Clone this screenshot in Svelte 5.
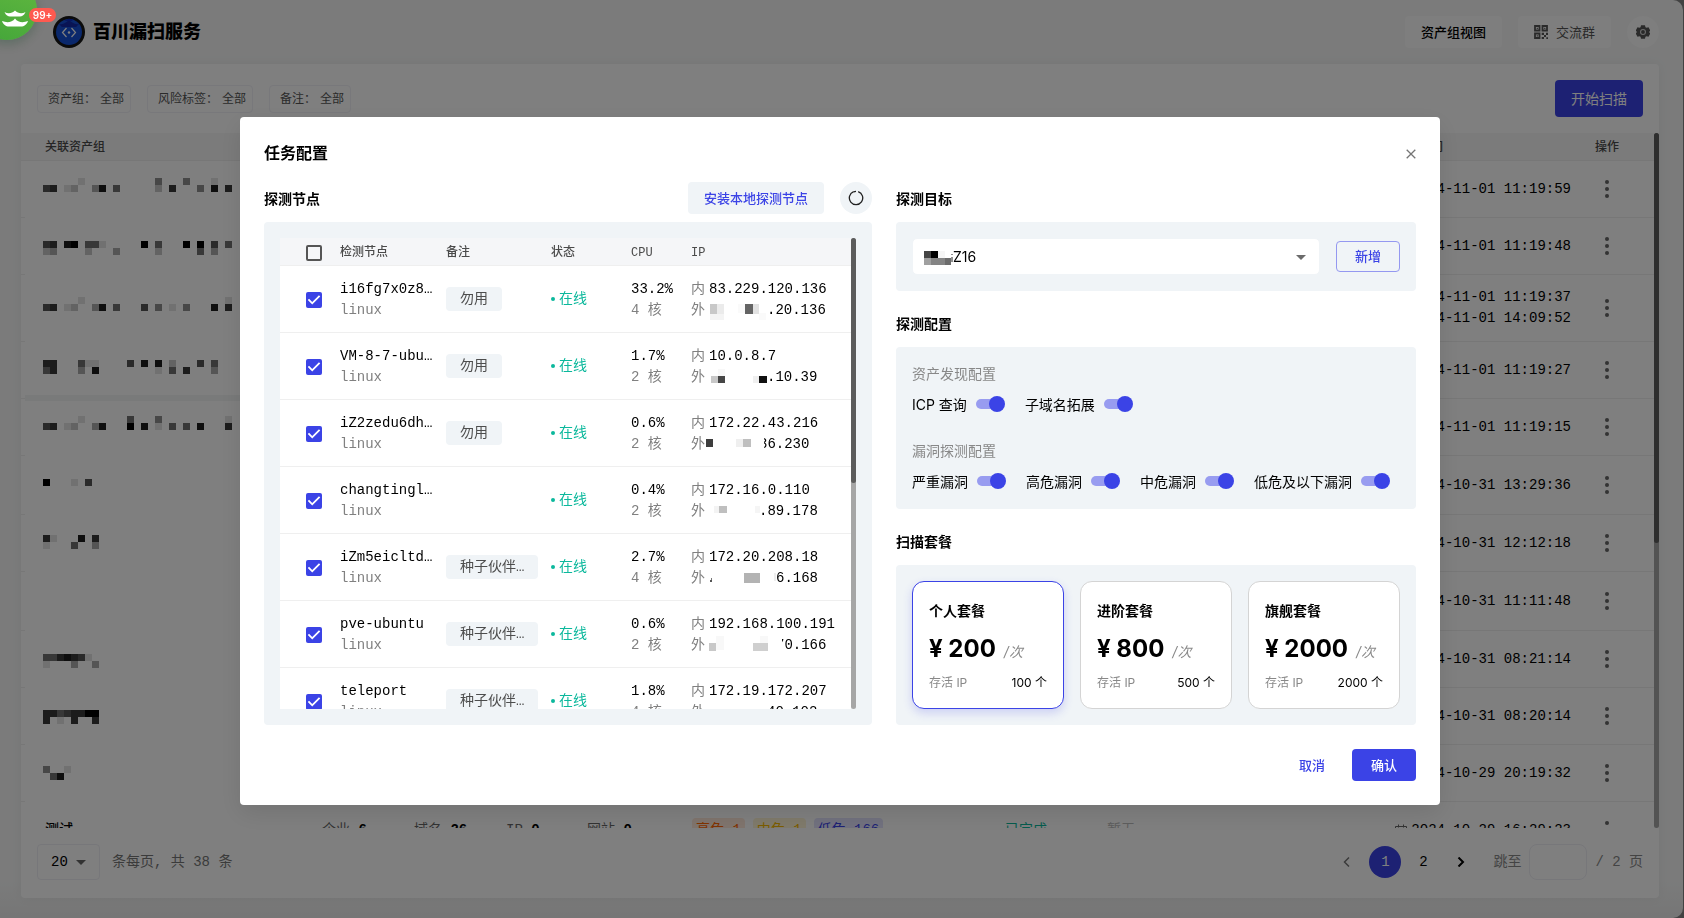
<script lang="ts">
	type Patch = [x: number, y: number, w: number, h: number, fill: string];

	let tasks = [
		{ times: ['2024-11-01 11:19:59'] },
		{ times: ['2024-11-01 11:19:48'] },
		{ times: ['2024-11-01 11:19:37', '2024-11-01 14:09:52'] },
		{ times: ['2024-11-01 11:19:27'] },
		{ times: ['2024-11-01 11:19:15'] },
		{ times: ['2024-10-31 13:29:36'], tall: true },
		{ times: ['2024-10-31 12:12:18'] },
		{ times: ['2024-10-31 11:11:48'], tall: true },
		{ times: ['2024-10-31 08:21:14'] },
		{ times: ['2024-10-31 08:20:14'] },
		{ times: ['2024-10-29 20:19:32'] }
	];

	// each mask line: y offset and the darkness (0-9) of its 7px cells
	const mask: [number, string][] = [
		[12, '.....1..........4...4...1'],
		[19, '67.12..38.5.....2.7...4.8.7'],
		[75, '67.89.551.....9.5...9.9.6.5'],
		[82, '23....2...3.....2.....5.3'],
		[131, '.....1....................1'],
		[138, '67.12..38.5...6.4.1.4...8.7'],
		[194, '77...511....6.8.8.2...6.5'],
		[201, '57...3.8........1.5.7...3'],
		[250, '.....1......5...4.........1'],
		[257, '67.12..38...9.8.1.5.5.8...7'],
		[313, '9...1.6'],
		[369, '71...8.7'],
		[376, '1...5..3'],
		[488, '5578761'],
		[495, '1...3..3'],
		[544, '77567799'],
		[551, '7.1.7..7'],
		[600, '4..1'],
		[607, '.58']
	];
	const maskCells = mask.flatMap(([y, line]) =>
		[...line].map((c, i) => ({ x: 18 + i * 7, y, dark: Number(c) / 9 })).filter((c) => c.dark > 0)
	);

	let nodes: {
		name: string;
		remark?: string;
		cpu: string;
		cores: number;
		inner: string;
		outer: string;
		hidden: number;
		patches: Patch[];
		checked: boolean;
	}[] = [
		{
			name: 'i16fg7x0z8…', remark: '勿用', cpu: '33.2%', cores: 4,
			inner: '83.229.120.136', outer: '.20.136', hidden: 58, checked: true,
			patches: [[1, 4, 7, 10, '#c8c8c8'], [8, 4, 7, 10, '#ebebeb'], [1, 14, 14, 6, '#f4f4f4'], [29, 4, 7, 9, '#fafafa'], [36, 4, 8, 10, '#646464'], [44, 4, 6, 10, '#e2e2e2'], [50, 13, 7, 7, '#fafafa']]
		},
		{
			name: 'VM-8-7-ubu…', remark: '勿用', cpu: '1.7%', cores: 2,
			inner: '10.0.8.7', outer: '.10.39', hidden: 58, checked: true,
			patches: [[2, 9, 7, 7, '#c8c8c8'], [9, 9, 7, 7, '#464646'], [9, 2, 7, 7, '#f8f8f8'], [44, 9, 6, 7, '#efefef'], [50, 9, 8, 7, '#111111']]
		},
		{
			name: 'iZ2zedu6dh…', remark: '勿用', cpu: '0.6%', cores: 2,
			inner: '172.22.43.216', outer: '36.230', hidden: 50, checked: true,
			patches: [[-3, 5, 7, 8, '#3d3d3d'], [27, 5, 7, 8, '#efefef'], [34, 5, 8, 8, '#bfbfbf'], [50, 2, 5, 17, '#ffffff']]
		},
		{
			name: 'changtingl…', cpu: '0.4%', cores: 2,
			inner: '172.16.0.110', outer: '.89.178', hidden: 50, checked: true,
			patches: [[5, 5, 5, 7, '#f3f3f3'], [10, 5, 8, 7, '#bfbfbf'], [46, 5, 5, 7, '#f5f5f5']]
		},
		{
			name: 'iZm5eicltd…', remark: '种子伙伴…', cpu: '2.7%', cores: 4,
			inner: '172.20.208.18', outer: '6.168', hidden: 67, checked: true,
			patches: [[2, 10, 1, 2, '#777777'], [1, 12, 2, 2, '#555555'], [35, 5, 16, 10, '#b3b3b3'], [65, 5, 2, 8, '#eeeeee']]
		},
		{
			name: 'pve-ubuntu', remark: '种子伙伴…', cpu: '0.6%', cores: 2,
			inner: '192.168.100.191', outer: '70.166', hidden: 67, checked: true,
			patches: [[0, 8, 7, 8, '#c8c8c8'], [7, 1, 8, 14, '#f8f8f8'], [44, 8, 15, 8, '#cfcfcf'], [51, 1, 8, 7, '#f8f8f8'], [67, 2, 6, 17, '#ffffff']]
		},
		{
			name: 'teleport', remark: '种子伙伴…', cpu: '1.8%', cores: 4,
			inner: '172.19.172.207', outer: '40.102', hidden: 58, checked: true,
			patches: []
		}
	];

	let discovery = [
		{ name: 'ICP 查询', on: true },
		{ name: '子域名拓展', on: true }
	];
	let risks = [
		{ name: '严重漏洞', on: true },
		{ name: '高危漏洞', on: true },
		{ name: '中危漏洞', on: true },
		{ name: '低危及以下漏洞', on: true }
	];

	const plans = [
		{ id: 'personal', name: '个人套餐', price: 200, ips: 100 },
		{ id: 'advanced', name: '进阶套餐', price: 800, ips: 500 },
		{ id: 'flagship', name: '旗舰套餐', price: 2000, ips: 2000 }
	];
	let plan = 'personal';
	let allChecked = false;
</script>

<div class="shell">
	<header>
		<svg class="logo" viewBox="0 0 32 32" aria-hidden="true">
			<circle cx="16" cy="16" r="16" fill="#161616" />
			<circle cx="16" cy="16" r="13" fill="#1450d8" />
			<path d="M6 8q5 1 10-4q5 5 10 4l-3 3H9z" fill="#1228a8" />
			<path d="M11 4q3 0 5-1.500q2 1.500 5 0l-2 2.500h-6z" fill="#0a2cc0" />
			<path d="M13.500 12L9.500 16.500l4 4.500M18.500 12l4 4.500l-4 4.500" fill="none" stroke="#fff" stroke-width="1.200" />
			<circle cx="16" cy="16.500" r="1.200" fill="#fff" />
		</svg>
		<h1>百川漏扫服务</h1>
		<nav>
			<button class="view">资产组视图</button>
			<button class="group">
				<svg viewBox="0 0 14 14" width="14" height="14" aria-hidden="true">
					<path d="M1 1h4.500v4.500H1zM8.500 1H13v4.500H8.500zM1 8.500h4.500V13H1z" fill="none" stroke="currentColor" stroke-width="1.800" />
					<path d="M2.700 2.700h1.200v1.200H2.700zM10.200 2.700h1.200v1.200h-1.200zM2.700 10.200h1.200v1.200H2.700zM7.700 7.700h2.300v2.300H7.700zM10 10h2v2h-2zM12 7.700h2V10h-2zM7.700 12h2.300v2H7.700zM12.300 12.300H14V14h-1.700z" fill="currentColor" />
				</svg>
				交流群
			</button>
			<button class="gear" aria-label="设置">
				<svg viewBox="2 2 20 20" width="14" height="14" aria-hidden="true">
					<path d="M9.200 2.300h5.600l.7 2.800 1.600.9 2.800-.8 2.600 4.700-2 2.100 2 2.100-2.600 4.700-2.800-.8-1.600.9-.7 2.800H9.200l-.7-2.800-1.600-.9-2.800.8-2.600-4.700 2-2.100-2-2.100 2.600-4.700 2.800.8 1.600-.9z" fill="currentColor" />
					<circle cx="12" cy="12" r="3.500" fill="none" stroke="#d8d8d8" stroke-width="1.500" />
				</svg>
			</button>
		</nav>
	</header>

	<main>
		<div class="toolbar">
			<button class="filter"><span>资产组：</span>全部</button>
			<button class="filter"><span>风险标签：</span>全部</button>
			<button class="filter"><span>备注：</span>全部</button>
			<button class="start">开始扫描</button>
		</div>

		<div class="scroll tasks">
			<div class="view-area">
				<table>
					<colgroup>
						<col style:width="277px" />
						<col style:width="370px" />
						<col style:width="313px" />
						<col style:width="102px" />
						<col />
						<col style:width="200px" />
						<col style:width="83px" />
					</colgroup>
					<thead>
						<tr>
							<th>关联资产组</th>
							<th></th>
							<th></th>
							<th></th>
							<th></th>
							<th>任务时间</th>
							<th>操作</th>
						</tr>
					</thead>
					<tbody>
						{#each tasks as task}
							<tr class:tall={task.tall}>
								<td></td>
								<td></td>
								<td></td>
								<td></td>
								<td></td>
								<td class="time">
									{#each task.times as time}
										<div>{time}</div>
									{/each}
								</td>
								<td>
									<button class="more" aria-label="更多"><i></i><i></i><i></i></button>
								</td>
							</tr>
						{/each}
						<tr>
							<td class="name">测试</td>
							<td>
								<div class="stats">
									<span>企业 <b>6</b></span>
									<span>域名 <b>26</b></span>
									<span class="short">IP <b>0</b></span>
									<span>网站 <b>0</b></span>
								</div>
							</td>
							<td>
								<div class="levels">
									<span class="high">高危 1</span>
									<span class="medium">中危 1</span>
									<span class="low">低危 166</span>
								</div>
							</td>
							<td class="done">已完成</td>
							<td class="none">暂无</td>
							<td class="time">
								<div>
									<svg viewBox="0 0 12 12" width="12" height="12" aria-hidden="true">
										<path d="M.5 2.500h11v9H.5zM.5 5h11M3.500.5v3M8.500.5v3" fill="none" stroke="#666" />
									</svg>2024-10-29 16:29:23
								</div>
							</td>
							<td>
								<button class="more" aria-label="更多"><i></i><i></i><i></i></button>
							</td>
						</tr>
					</tbody>
				</table>
				<svg class="mask" width="217" height="652" aria-hidden="true">
					<rect width="217" height="652" fill="#fff" />
					<rect y="229" width="217" height="6" fill="#f3f5f4" />
					{#each maskCells as cell}
						<rect x={cell.x} y={cell.y} width="7" height="7" fill-opacity={cell.dark} />
					{/each}
				</svg>
			</div>
			<div class="bar"><div class="thumb"></div></div>
		</div>

		<footer>
			<div class="size">
				<select aria-label="每页条数">
					<option>20</option>
				</select>
				<svg viewBox="0 0 10 5" width="10" height="5" aria-hidden="true"><path d="M0 0h10L5 5z" fill="currentColor" /></svg>
			</div>
			<span class="total">条每页, 共 38 条</span>
			<div class="pages">
				<button class="prev" aria-label="上一页">
					<svg viewBox="0 0 8 10" width="8" height="10" aria-hidden="true"><path d="M6 .5L1.500 5L6 9.500" fill="none" stroke="currentColor" stroke-width="1.500" /></svg>
				</button>
				<button class="current">1</button>
				<button>2</button>
				<button aria-label="下一页">
					<svg viewBox="0 0 8 10" width="8" height="10" aria-hidden="true"><path d="M1.500 .5L6 5L1.500 9.500" fill="none" stroke="currentColor" stroke-width="2" /></svg>
				</button>
			</div>
			<label class="jump">
				跳至
				<input type="text" />
				<span>/ 2 页</span>
			</label>
		</footer>
	</main>
</div>

<div class="backdrop">
	<div class="modal" role="dialog" aria-modal="true" aria-labelledby="dialog-title">
		<div class="title">
			<h2 id="dialog-title">任务配置</h2>
			<button aria-label="关闭">
				<svg viewBox="0 0 10 10" width="10" height="10" aria-hidden="true"><path d="M.7.7l8.600 8.600M9.300.7L.7 9.300" fill="none" stroke="currentColor" stroke-width="1.300" /></svg>
			</button>
		</div>

		<div class="columns">
			<section class="left">
				<div class="heading">
					<h3>探测节点</h3>
					<button class="install">安装本地探测节点</button>
					<button class="refresh" aria-label="刷新">
						<svg viewBox="0 0 16 16" width="16" height="16" aria-hidden="true"><path d="M10.200 1.600a6.700 6.700 0 1 1-4.600.1" fill="none" stroke="currentColor" stroke-width="1.300" /><path d="M5.300 1.200L8 .7v1.200l-2.200.6z" fill="currentColor" /></svg>
					</button>
				</div>
				<div class="box grow">
					<div class="scroll nodes">
						<div class="view-area">
							<table>
								<colgroup>
									<col style:width="60px" />
									<col style:width="106px" />
									<col style:width="105px" />
									<col style:width="80px" />
									<col style:width="60px" />
									<col />
								</colgroup>
								<thead>
									<tr>
										<th class="pick"><input type="checkbox" aria-label="全选" bind:checked={allChecked} /></th>
										<th>检测节点</th>
										<th>备注</th>
										<th>状态</th>
										<th>CPU</th>
										<th>IP</th>
									</tr>
								</thead>
								<tbody>
									{#each nodes as node}
										<tr>
											<td class="pick"><input type="checkbox" aria-label={node.name} bind:checked={node.checked} /></td>
											<td>
												<div>{node.name}</div>
												<div class="dim">linux</div>
											</td>
											<td class="remark">
												{#if node.remark}<span class="tag">{node.remark}</span>{/if}
											</td>
											<td class="status"><span class="online">在线</span></td>
											<td>
												<div>{node.cpu}</div>
												<div class="dim">{node.cores} 核</div>
											</td>
											<td>
												<div class="ip"><span class="dim">内</span>{node.inner}</div>
												<div class="ip">
													<span class="dim">外</span><svg width={node.hidden} height="21" aria-hidden="true">
														{#each node.patches as [x, y, w, h, fill]}
															<rect {x} {y} width={w} height={h} {fill} />
														{/each}
													</svg>{node.outer}
												</div>
											</td>
										</tr>
									{/each}
								</tbody>
							</table>
						</div>
						<div class="bar"><div class="thumb"></div></div>
					</div>
				</div>
			</section>

			<section class="right">
				<div class="heading"><h3>探测目标</h3></div>
				<div class="box target">
					<div class="picker">
						<select aria-label="探测目标">
							<option>Z16</option>
						</select>
						<svg class="redacted" viewBox="0 0 29 14" width="29" height="14" aria-hidden="true">
							<path d="M0 0h7v7H0z" fill="#444" />
							<path d="M7 0h7v7H7z" />
							<path d="M14 0h7v7h-7z" fill="#f6f6f6" />
							<path d="M0 7h7v7H0z" fill="#a0a0a0" />
							<path d="M7 7h14v7H7z" fill="#848484" />
							<path d="M21 7h6v7h-6z" fill="#6c6c6c" />
							<path d="M27.500 3h1v1h-1zM27.500 6h1v5h-1z" fill="#222" />
						</svg>
						<svg class="arrow" viewBox="0 0 10 5" width="10" height="5" aria-hidden="true"><path d="M0 0h10L5 5z" fill="currentColor" /></svg>
					</div>
					<button class="add">新增</button>
				</div>

				<div class="heading"><h3>探测配置</h3></div>
				<div class="box config">
					<h4>资产发现配置</h4>
					<div class="switches">
						{#each discovery as item}
							<label>{item.name}<input type="checkbox" role="switch" bind:checked={item.on} /></label>
						{/each}
					</div>
					<h4>漏洞探测配置</h4>
					<div class="switches">
						{#each risks as item}
							<label>{item.name}<input type="checkbox" role="switch" bind:checked={item.on} /></label>
						{/each}
					</div>
				</div>

				<div class="heading"><h3>扫描套餐</h3></div>
				<div class="box plans">
					{#each plans as p}
						<label class:selected={plan === p.id}>
							<input type="radio" name="plan" value={p.id} bind:group={plan} />
							<strong>{p.name}</strong>
							<span class="price">¥ {p.price}<em>/次</em></span>
							<span class="quota"><span>存活 IP</span>{p.ips} 个</span>
						</label>
					{/each}
				</div>
			</section>
		</div>

		<div class="actions">
			<button class="cancel">取消</button>
			<button class="confirm">确认</button>
		</div>
	</div>
</div>

<a class="widget" href="#messages" aria-label="消息">
	<svg viewBox="0 0 60 60" width="60" height="60" aria-hidden="true">
		<path d="M27.500 32C31 34 35 33.500 38 30.500C41 33.500 45 34 48.500 32C47 35.500 45 36.500 43 36.500H33C31 36.500 29 35.500 27.500 32Z" fill="#fff" />
		<path d="M25 41C30 43 35 42.500 38 38.500C41 42.500 46 43 51 41C50 44.500 47 46.500 44 46.500H32C29 46.500 26 44.500 25 41Z" fill="#fff" />
	</svg>
	<span>99+</span>
</a>

<style>
	:global(body) {
		background: #858585;
	}
	.shell,
	.backdrop,
	.widget {
		--blue: #3b43e6;
		--soft: #f0f4f7;
		--mono: 'Liberation Mono', 'Noto Sans CJK SC', monospace;
		font-family: Inter, 'Noto Sans CJK SC', sans-serif;
		font-size: 14px;
		line-height: 21px;
		color: #000;
	}
	.shell *,
	.backdrop * {
		box-sizing: border-box;
	}
	h1,
	h2,
	h3,
	h4 {
		margin: 0;
	}
	button,
	select,
	input {
		font: inherit;
		color: inherit;
		margin: 0;
	}
	button {
		display: flex;
		align-items: center;
		justify-content: center;
		border: 0;
		padding: 0;
		background: none;
		border-radius: 4px;
		cursor: pointer;
		white-space: nowrap;
	}

	/* page behind the dialog */
	.shell {
		height: 100vh;
		margin-right: 1px;
		border-radius: 0 10px 10px 0;
		display: flex;
		flex-direction: column;
		background: linear-gradient(#f6f7f7 96%, #ececec);
	}
	header {
		display: flex;
		align-items: center;
		height: 64px;
		flex: none;
		padding: 0 24px 0 53px;
	}
	.logo {
		width: 32px;
		height: 32px;
		margin-right: 8px;
	}
	h1 {
		font-size: 18px;
		line-height: 24px;
		font-weight: 900;
	}
	nav {
		display: flex;
		gap: 16px;
		margin-left: auto;
		font-size: 13px;
	}
	nav button {
		height: 32px;
		padding: 0 16px;
		gap: 8px;
		background: #fcfcfc;
	}
	.view {
		font-weight: 500;
	}
	.group {
		color: #555;
	}
	.gear {
		width: 32px;
		padding: 0;
		border-radius: 50%;
		color: #555;
	}
	main {
		flex: 1;
		min-height: 0;
		display: flex;
		flex-direction: column;
		margin: 0 24px 20px 21px;
		background: #fff;
		border-radius: 4px;
		box-shadow: 0 0 12px rgba(0, 0, 0, 0.05);
		overflow: hidden;
	}
	.toolbar {
		display: flex;
		align-items: center;
		gap: 16px;
		padding: 16px;
	}
	.filter {
		height: 28px;
		padding: 0 6px 0 10px;
		gap: 4px;
		border: 1px solid #f0f0f6;
		font-size: 12px;
		color: #555;
	}
	.start {
		height: 37px;
		padding: 0 16px;
		margin-left: auto;
		background: var(--blue);
		color: #fff;
	}

	.scroll {
		flex: 1;
		display: flex;
		contain: size;
		overflow: hidden;
	}
	.view-area {
		flex: 1;
		min-width: 0;
		position: relative;
		overflow: hidden;
	}
	.bar {
		width: 5px;
		background: #a6a6a6;
		border-radius: 3px;
	}
	.thumb {
		background: #5c5c5c;
		border-radius: 3px;
		height: 52%;
	}
	.tasks .thumb {
		height: 59%;
	}
	table {
		width: 100%;
		table-layout: fixed;
		border-collapse: separate;
		border-spacing: 0;
		font-family: var(--mono);
	}
	th {
		height: 28px;
		padding: 0;
		border-bottom: 1px solid #efefef;
		background: #f5f6f8;
		font-size: 12px;
		line-height: 18px;
		font-weight: 500;
		color: #4a4a4a;
		text-align: left;
		white-space: nowrap;
	}
	td {
		height: 57px;
		padding: 0;
		border-bottom: 1px solid #efefef;
		white-space: nowrap;
	}
	.tasks th {
		font-family: Inter, 'Noto Sans CJK SC', sans-serif;
		background: #f6f6f7;
	}
	.tasks th,
	.tasks td {
		padding-left: 24px;
	}
	.tasks td {
		padding-top: 12px;
		padding-bottom: 12px;
	}
	.tall td {
		height: 59px;
	}
	.time div {
		display: flex;
		align-items: center;
		justify-content: flex-end;
		gap: 4px;
	}
	.more {
		flex-direction: column;
		gap: 3px;
		width: 24px;
		height: 24px;
	}
	.more i {
		width: 4px;
		height: 4px;
		border-radius: 50%;
		background: #666;
	}
	.mask {
		position: absolute;
		left: 4px;
		top: 33px;
	}
	.stats {
		display: flex;
		color: #666;
	}
	.stats span {
		flex: none;
		width: 92px;
	}
	.stats .short {
		width: 81px;
	}
	.stats b {
		color: #000;
	}
	.levels {
		display: flex;
		gap: 8px;
	}
	.levels span {
		padding: 0 4px;
		line-height: 24px;
		border-radius: 4px;
	}
	.high {
		color: #ff6600;
		background: #ffe8da;
	}
	.medium {
		color: #f5b800;
		background: #fff5d6;
	}
	.low {
		color: #3b43e6;
		background: #e2e3fc;
	}
	.name {
		font-weight: 500;
	}
	.done {
		color: #0bb89c;
	}
	.none {
		color: #bbb;
	}

	footer {
		display: flex;
		align-items: center;
		padding: 16px 16px 18px;
		font-family: var(--mono);
	}
	.size {
		display: flex;
		position: relative;
		color: #666;
	}
	.size select {
		width: 63px;
		height: 36px;
		padding: 0 13px;
		border: 1px solid #eeeef5;
		border-radius: 4px;
		background: none;
		color: #000;
		font-weight: 500;
		appearance: none;
	}
	.size svg {
		position: absolute;
		right: 14px;
		top: 16px;
		pointer-events: none;
	}
	.total {
		margin-left: 12px;
		color: #777;
	}
	.pages {
		display: flex;
		gap: 6px;
		margin: 0 16px 0 auto;
	}
	.pages button {
		width: 32px;
		height: 32px;
		border-radius: 50%;
	}
	.pages .prev {
		color: #777;
	}
	.pages .current {
		background: var(--blue);
		color: #fff;
	}
	.jump {
		display: flex;
		align-items: center;
		gap: 8px;
		color: #888;
	}
	.jump input {
		width: 58px;
		height: 36px;
		border: 1px solid #eeeef5;
		border-radius: 8px;
		background: none;
	}

	/* dialog */
	.backdrop {
		position: fixed;
		inset: 0;
		display: flex;
		align-items: center;
		justify-content: center;
		padding: 4px 4px 0 0;
		box-sizing: border-box;
		background: rgba(0, 0, 0, 0.5);
	}
	.modal {
		width: 100%;
		max-width: 1200px;
		padding: 24px;
		background: #fff;
		border-radius: 4px;
		box-shadow: 0 8px 24px rgba(0, 0, 0, 0.1);
	}
	.title {
		display: flex;
		align-items: center;
		justify-content: space-between;
		margin-bottom: 16px;
	}
	h2 {
		font-size: 16px;
		line-height: 25px;
		font-weight: 600;
	}
	.title button {
		width: 10px;
		height: 10px;
		color: #757575;
	}
	.title button svg {
		flex: none;
	}
	.columns {
		display: grid;
		grid-template-columns: 608fr 520fr;
		gap: 24px;
	}
	.left,
	.right {
		display: flex;
		flex-direction: column;
		min-width: 0;
	}
	.heading {
		display: flex;
		align-items: center;
		gap: 16px;
		height: 32px;
		margin-bottom: 8px;
	}
	h3 {
		font-size: 14px;
		line-height: 21px;
		font-weight: 600;
		margin-right: auto;
	}
	.install {
		height: 32px;
		padding: 0 16px;
		background: var(--soft);
		color: var(--blue);
		font-size: 13px;
		font-weight: 500;
	}
	.refresh {
		width: 32px;
		height: 32px;
		border-radius: 50%;
		background: var(--soft);
		color: #222;
	}
	.box {
		padding: 16px;
		background: var(--soft);
		border-radius: 4px;
	}
	.box + .heading {
		margin-top: 16px;
	}
	.grow {
		flex: 1;
		display: flex;
		flex-direction: column;
	}
	.nodes th {
		padding-top: 2px;
	}
	.nodes td {
		height: 67px;
		padding-top: 2px;
		background: #fff;
	}
	.nodes .remark,
	.nodes .status {
		padding-top: 0;
	}
	.nodes .pick {
		padding-left: 26px;
	}
	.pick input {
		display: block;
		width: 16px;
		height: 16px;
		appearance: none;
		border: 2px solid #555;
		border-radius: 2px;
		background: transparent;
	}
	.pick input:checked {
		border: 0;
		background: var(--blue);
	}
	.pick input:checked::after {
		content: '';
		display: block;
		width: 16px;
		height: 16px;
		background: #fff;
		clip-path: polygon(39% 78%, 11% 50%, 19% 42%, 39% 62%, 81% 20%, 89% 28%);
	}
	.dim {
		color: #808080;
	}
	.tag {
		display: inline-block;
		padding: 0 14px;
		line-height: 24px;
		border-radius: 4px;
		background: var(--soft);
		color: #4d4d4d;
	}
	.online {
		display: flex;
		align-items: center;
		gap: 4px;
		color: #0bb89c;
	}
	.online::before {
		content: '';
		width: 4px;
		height: 4px;
		border-radius: 50%;
		background: currentColor;
	}
	.ip {
		display: flex;
	}
	.ip .dim {
		width: 18px;
	}
	.ip svg {
		flex: none;
		position: relative;
		overflow: visible;
	}

	.target {
		display: flex;
		align-items: center;
		gap: 16px;
	}
	.picker {
		flex: 1;
		display: flex;
		position: relative;
		color: #6b6b6b;
	}
	.picker select {
		width: 100%;
		height: 37px;
		padding: 0 40px;
		border: 1px solid var(--soft);
		border-radius: 5px;
		background: #fff;
		color: #000;
		appearance: none;
	}
	.redacted {
		position: absolute;
		left: 12px;
		top: 13px;
	}
	.arrow {
		position: absolute;
		right: 14px;
		top: 17px;
		pointer-events: none;
	}
	.add {
		width: 64px;
		height: 31px;
		border: 1px solid #9498f0;
		color: var(--blue);
		font-size: 13px;
		font-weight: 500;
	}

	h4 {
		font-size: 14px;
		line-height: 21px;
		font-weight: 400;
		color: #888;
	}
	.switches {
		display: flex;
		gap: 20px;
		margin-top: 8px;
	}
	.switches + h4 {
		margin-top: 24px;
	}
	.switches label {
		display: flex;
		align-items: center;
		gap: 8px;
		height: 24px;
		white-space: nowrap;
	}
	.switches input {
		appearance: none;
		position: relative;
		width: 30px;
		height: 16px;
	}
	.switches input::before {
		content: '';
		position: absolute;
		inset: 3px 2px 3px 1px;
		border-radius: 5px;
		background: #bbb;
	}
	.switches input::after {
		content: '';
		position: absolute;
		left: 0;
		top: 0;
		width: 16px;
		height: 16px;
		border-radius: 50%;
		background: #fff;
	}
	.switches input:checked::before {
		background: #989cf0;
	}
	.switches input:checked::after {
		left: 14px;
		background: var(--blue);
	}

	.plans {
		display: grid;
		grid-template-columns: repeat(3, 1fr);
		gap: 16px;
	}
	.plans label {
		display: flex;
		flex-direction: column;
		height: 128px;
		padding: 18px 16px;
		border: 1px solid #d4d4d4;
		border-radius: 12px;
		background: #fff;
		cursor: pointer;
	}
	.plans .selected {
		border-color: var(--blue);
		box-shadow: 0 4px 10px rgba(59, 67, 230, 0.2);
	}
	.plans input {
		position: absolute;
		opacity: 0;
		pointer-events: none;
	}
	strong {
		font-weight: 700;
	}
	.price {
		margin: 12px 0 6px;
		font-size: 24px;
		line-height: 32px;
		font-weight: 700;
	}
	.price em {
		margin-left: 8px;
		font-size: 14px;
		font-weight: 400;
		color: #888;
	}
	.quota {
		display: flex;
		justify-content: space-between;
		font-size: 12px;
		line-height: 18px;
	}
	.quota span {
		color: #888;
	}

	.actions {
		display: flex;
		justify-content: flex-end;
		gap: 8px;
		margin-top: 24px;
	}
	.actions button {
		width: 64px;
		height: 32px;
		font-size: 13px;
		font-weight: 500;
	}
	.cancel {
		color: var(--blue);
	}
	.confirm {
		background: var(--blue);
		color: #fff;
	}

	/* floating chat bubble, tucked into the corner */
	.widget {
		position: fixed;
		left: -23px;
		top: -20px;
		width: 60px;
		height: 60px;
		border-radius: 50%;
		background: linear-gradient(200deg, #62b83f, #43a53a);
		box-shadow: 0 4px 12px rgba(0, 60, 20, 0.25);
	}
	.widget span {
		position: absolute;
		left: 52px;
		top: 28px;
		width: 27px;
		border-radius: 7px;
		background: #ff5a50;
		color: #fff;
		font-size: 10px;
		line-height: 14px;
		font-weight: 600;
		text-align: center;
	}
</style>
